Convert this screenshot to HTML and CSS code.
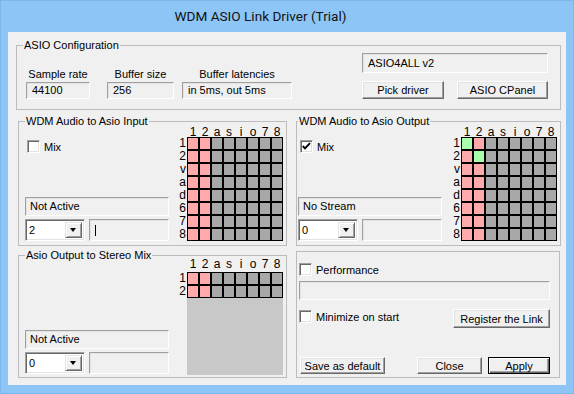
FILE: index.html
```html
<!DOCTYPE html>
<html lang="en">
<head>
    <meta charset="UTF-8">
    <title>WDM ASIO Link Driver (Trial)</title>
    <link rel="stylesheet" href="styles.css">
</head>
<body>
    <div class="window">
        <div class="titlebar">WDM ASIO Link Driver (Trial)</div>

        <div class="client">
            <!-- ASIO configuration -->
            <div class="group asio">
                <div class="group-title">ASIO Configuration</div>
                <div class="asio-body">
                    <div class="asio-params">
                        <div class="param param-rate">
                            <div class="param-label">Sample rate</div>
                            <div class="field">44100</div>
                        </div>
                        <div class="param param-size">
                            <div class="param-label">Buffer size</div>
                            <div class="field">256</div>
                        </div>
                        <div class="param param-latency">
                            <div class="param-label">Buffer latencies</div>
                            <div class="field">in 5ms, out 5ms</div>
                        </div>
                    </div>
                    <div class="asio-driver">
                        <div class="field driver-name">ASIO4ALL v2</div>
                        <div class="driver-buttons">
                            <button class="btn btn-pick">Pick driver</button>
                            <button class="btn btn-cpanel">ASIO CPanel</button>
                        </div>
                    </div>
                </div>
            </div>

            <!-- WDM routing -->
            <div class="row row-routing">
                <div class="group route route-input">
                    <div class="group-title">WDM Audio to Asio Input</div>
                    <div class="route-body">
                        <div class="route-side">
                            <div class="checkrow">
                                <span class="check"></span>
                                <span>Mix</span>
                            </div>
                            <div class="field status">Not Active</div>
                            <div class="combo-row">
                                <div class="combo">
                                    <span class="combo-value">2</span>
                                    <span class="combo-arrow"></span>
                                </div>
                                <div class="field combo-field"><span class="caret"></span></div>
                            </div>
                        </div>
                        <div class="matrix" data-rows="8"></div>
                    </div>
                </div>

                <div class="group route route-output">
                    <div class="group-title">WDM Audio to Asio Output</div>
                    <div class="route-body">
                        <div class="route-side">
                            <div class="checkrow">
                                <span class="check checked">
                                    <svg viewBox="0 0 11 11" width="11" height="11"><polyline points="1.8,5 4,7.4 9,2.2" fill="none" stroke="#000" stroke-width="1.9"/></svg>
                                </span>
                                <span>Mix</span>
                            </div>
                            <div class="field status">No Stream</div>
                            <div class="combo-row">
                                <div class="combo">
                                    <span class="combo-value">0</span>
                                    <span class="combo-arrow"></span>
                                </div>
                                <div class="field combo-field"></div>
                            </div>
                        </div>
                        <div class="matrix" data-rows="8" data-green="0-0,1-1"></div>
                    </div>
                </div>
            </div>

            <div class="row row-bottom">
                <div class="group route route-stereo">
                    <div class="group-title">Asio Output to Stereo Mix</div>
                    <div class="route-body">
                        <div class="route-side">
                            <div class="field status">Not Active</div>
                            <div class="combo-row">
                                <div class="combo">
                                    <span class="combo-value">0</span>
                                    <span class="combo-arrow"></span>
                                </div>
                                <div class="field combo-field"></div>
                            </div>
                        </div>
                        <div class="matrix matrix-stereo" data-rows="2"></div>
                    </div>
                </div>

                <div class="group options">
                    <div class="checkrow">
                        <span class="check"></span>
                        <span>Performance</span>
                    </div>
                    <div class="field perf-field"></div>
                    <div class="options-row">
                        <div class="checkrow">
                            <span class="check"></span>
                            <span>Minimize on start</span>
                        </div>
                        <button class="btn btn-register">Register the Link</button>
                    </div>
                    <div class="options-buttons">
                        <button class="btn btn-save">Save as default</button>
                        <button class="btn btn-close">Close</button>
                        <button class="btn btn-apply">Apply</button>
                    </div>
                </div>
            </div>
        </div>
    </div>

    <script>
        // Build the routing matrices
        const COLS = ['1', '2', 'a', 's', 'i', 'o', '7', '8'];
        const ROWS = ['1', '2', 'v', 'a', 'd', '6', '7', '8'];

        document.querySelectorAll('.matrix').forEach(matrix => {
            const rows = parseInt(matrix.dataset.rows, 10);
            const green = (matrix.dataset.green || '').split(',');

            const head = document.createElement('div');
            head.className = 'matrix-head';
            COLS.forEach(c => {
                const s = document.createElement('span');
                s.textContent = c;
                head.appendChild(s);
            });

            const body = document.createElement('div');
            body.className = 'matrix-body';

            const labels = document.createElement('div');
            labels.className = 'matrix-rows';

            const area = document.createElement('div');
            area.className = 'matrix-area';
            const cells = document.createElement('div');
            cells.className = 'cells';

            for (let r = 0; r < rows; r++) {
                const l = document.createElement('span');
                l.textContent = ROWS[r];
                labels.appendChild(l);
                for (let c = 0; c < 8; c++) {
                    const cell = document.createElement('span');
                    cell.className = 'cell';
                    if (green.includes(r + '-' + c)) cell.classList.add('on');
                    else if (c < 2) cell.classList.add('pink');
                    cells.appendChild(cell);
                }
            }

            area.appendChild(cells);
            body.appendChild(labels);
            body.appendChild(area);
            matrix.appendChild(head);
            matrix.appendChild(body);
        });
    </script>
</body>
</html>
```

FILE: styles.css
```css
* {
    box-sizing: border-box;
}

body {
    margin: 0;
    font-family: 'Liberation Sans', Arial, sans-serif;
    font-size: 11px;
    color: #000;
}

.window {
    width: 574px;
    height: 394px;
    background: #8dc6f6;
    border: 1px solid #7db6ea;
}

.titlebar {
    height: 31px;
    line-height: 31px;
    text-align: center;
    padding-right: 53px;
    font-family: Roboto, 'Noto Sans', sans-serif;
    font-size: 13.6px;
    color: #111;
}

.client {
    margin: 0 7px;
    height: 353px;
    background: #f0f0f0;
    padding-top: 13px;
}

/* group boxes */
.group {
    border: 1px solid #bcbcbc;
}

.group-title {
    display: table;
    margin: -7px 0 0 6px;
    padding: 0 1px;
    line-height: 13px;
    background: #f0f0f0;
}

.row {
    display: flex;
    align-items: flex-start;
}

/* sunken fields */
.field {
    height: 19px;
    line-height: 17px;
    padding-left: 4px;
    background: #f0f0f0;
    border: 1px solid;
    border-color: #a0a0a0 #ffffff #ffffff #a0a0a0;
    box-shadow: inset 1px 1px #e3e3e3;
    white-space: nowrap;
    overflow: hidden;
}

.btn {
    font: inherit;
    color: #000;
    padding: 0;
    background: #f0f0f0;
    border: 1px solid;
    border-color: #ffffff #696969 #696969 #ffffff;
    box-shadow: inset -1px -1px #a0a0a0, inset 1px 1px #e3e3e3;
}

.btn-apply {
    border: 1px solid #000;
    box-shadow: inset 1px 1px #fff, inset -1px -1px #696969, inset -2px -2px #a0a0a0;
}

.check {
    display: block;
    width: 13px;
    height: 13px;
    background: #fff;
    border: 1px solid;
    border-color: #a0a0a0 #ffffff #ffffff #a0a0a0;
    box-shadow: inset 1px 1px #696969, inset -1px -1px #e3e3e3;
}

.check svg {
    display: block;
    margin: 0;
}

.checkrow {
    display: flex;
    align-items: center;
    gap: 4px;
    height: 13px;
    margin-left: 2px;
}

/* ASIO configuration */
.asio {
    margin-left: 8px;
    width: 545px;
    height: 65px;
}

.asio-body {
    display: flex;
    height: 57px;
}

.asio-params {
    display: flex;
    align-self: flex-end;
    padding: 0 0 10px 9px;
}

.param-label {
    line-height: 13px;
    text-align: center;
    margin-bottom: 1px;
}

.param .field {
    height: 17px;
    line-height: 15px;
}

.param-rate { width: 64px; }
.param-size { width: 67px; margin-left: 17px; }
.param-latency { width: 110px; margin-left: 8px; }

.param-rate .field,
.param-size .field,
.param-latency .field {
    padding-left: 5px;
}

.asio-driver {
    margin-left: auto;
    width: 186px;
    margin-right: 12px;
    padding-top: 1px;
}

.driver-name {
    height: 20px;
    line-height: 18px;
    padding-left: 5px;
}

.driver-buttons {
    display: flex;
    justify-content: space-between;
    margin-top: 8px;
}

.btn-pick { width: 82px; height: 18px; }
.btn-cpanel { width: 91px; height: 18px; }

/* routing groups */
.row-routing {
    margin-top: 11px;
}

.route-input,
.route-stereo {
    margin-left: 10px;
    width: 269px;
}

.route-input,
.route-output {
    height: 125px;
}

.route-output {
    margin-left: 9px;
    width: 265px;
}

.route-output .group-title {
    margin-left: 1px;
}

.route-body {
    display: flex;
    height: 117px;
}

.route-side {
    display: flex;
    flex-direction: column;
    width: 144px;
    padding: 12px 0 4px;
    margin: 0 8px 0 6px;
}

.route-output .route-side {
    margin: 0 9px 0 1px;
}

.route-side .status {
    margin-top: auto;
}

.combo-row {
    display: flex;
    justify-content: space-between;
    margin-top: 3px;
}

.combo {
    display: flex;
    width: 60px;
    height: 22px;
    padding: 2px;
    background: #fff;
    border: 1px solid;
    border-color: #a0a0a0 #ffffff #ffffff #a0a0a0;
    box-shadow: inset 1px 1px #696969, inset -1px -1px #e3e3e3;
}

.combo-value {
    flex: 1;
    line-height: 16px;
    padding-left: 1px;
}

.combo-arrow {
    position: relative;
    width: 17px;
    height: 16px;
    background: #f0f0f0;
    border: 1px solid;
    border-color: #e3e3e3 #696969 #696969 #e3e3e3;
    box-shadow: inset 1px 1px #fff, inset -1px -1px #a0a0a0;
}

.combo-arrow::after {
    content: '';
    position: absolute;
    left: 4px;
    top: 5px;
    border-left: 3.5px solid transparent;
    border-right: 3.5px solid transparent;
    border-top: 4px solid #000;
}

.combo-field {
    width: 80px;
    height: 22px;
    padding-left: 5px;
    padding-top: 5px;
}

.caret {
    display: block;
    width: 1px;
    height: 11px;
    background: #000;
}

/* matrix */
.matrix {
    font-size: 12px;
    width: 106px;
}

.matrix-head {
    display: flex;
    height: 9px;
    line-height: 8px;
    padding-left: 10px;
}

.matrix-head span {
    width: 12px;
    text-align: center;
}

.matrix-body {
    display: flex;
}

.matrix-rows {
    display: flex;
    flex-direction: column;
    width: 10px;
    text-align: right;
    padding-right: 1px;
}

.matrix-rows span {
    height: 13px;
    line-height: 13px;
}

.matrix-area {
    width: 96px;
}

.cells {
    display: grid;
    grid-template-columns: repeat(8, 10px);
    grid-auto-rows: 11px;
    gap: 2px;
    padding: 1px;
    background: #000;
}

.cell {
    background: #a8a8a8;
}

.cell.pink {
    background: #ffaaaa;
}

.cell.on {
    background: #aaffaa;
}

/* stereo mix */
.row-bottom {
    margin-top: 5px;
}

.route-stereo {
    height: 123px;
    margin-top: 4px;
}

.route-stereo .route-body {
    height: 115px;
}

.route-stereo .route-side {
    padding-bottom: 3px;
}

.matrix-stereo {
    margin-top: -2px;
}

.matrix-stereo .matrix-body {
    margin-top: 3px;
}

.matrix-stereo .matrix-area {
    height: 103px;
    background: #c8c8c8;
}

/* options */
.options {
    display: flex;
    flex-direction: column;
    margin-left: 9px;
    width: 264px;
    height: 127px;
    padding: 11px 9px 3px 2px;
}

.options > .checkrow {
    margin-left: 0;
}

.perf-field {
    margin-top: 5px;
}

.options-row {
    display: flex;
    align-items: flex-start;
    margin-top: 9px;
}

.options-row .checkrow {
    margin: 1px 0 0;
}

.btn-register {
    margin-left: auto;
    width: 97px;
    height: 19px;
}

.options-buttons {
    display: flex;
    margin-top: auto;
}

.btn-save { width: 85px; height: 17px; margin-left: 1px; }
.btn-close { width: 65px; height: 17px; margin-left: 32px; }
.btn-apply { width: 62px; height: 17px; margin-left: 6px; }
```
